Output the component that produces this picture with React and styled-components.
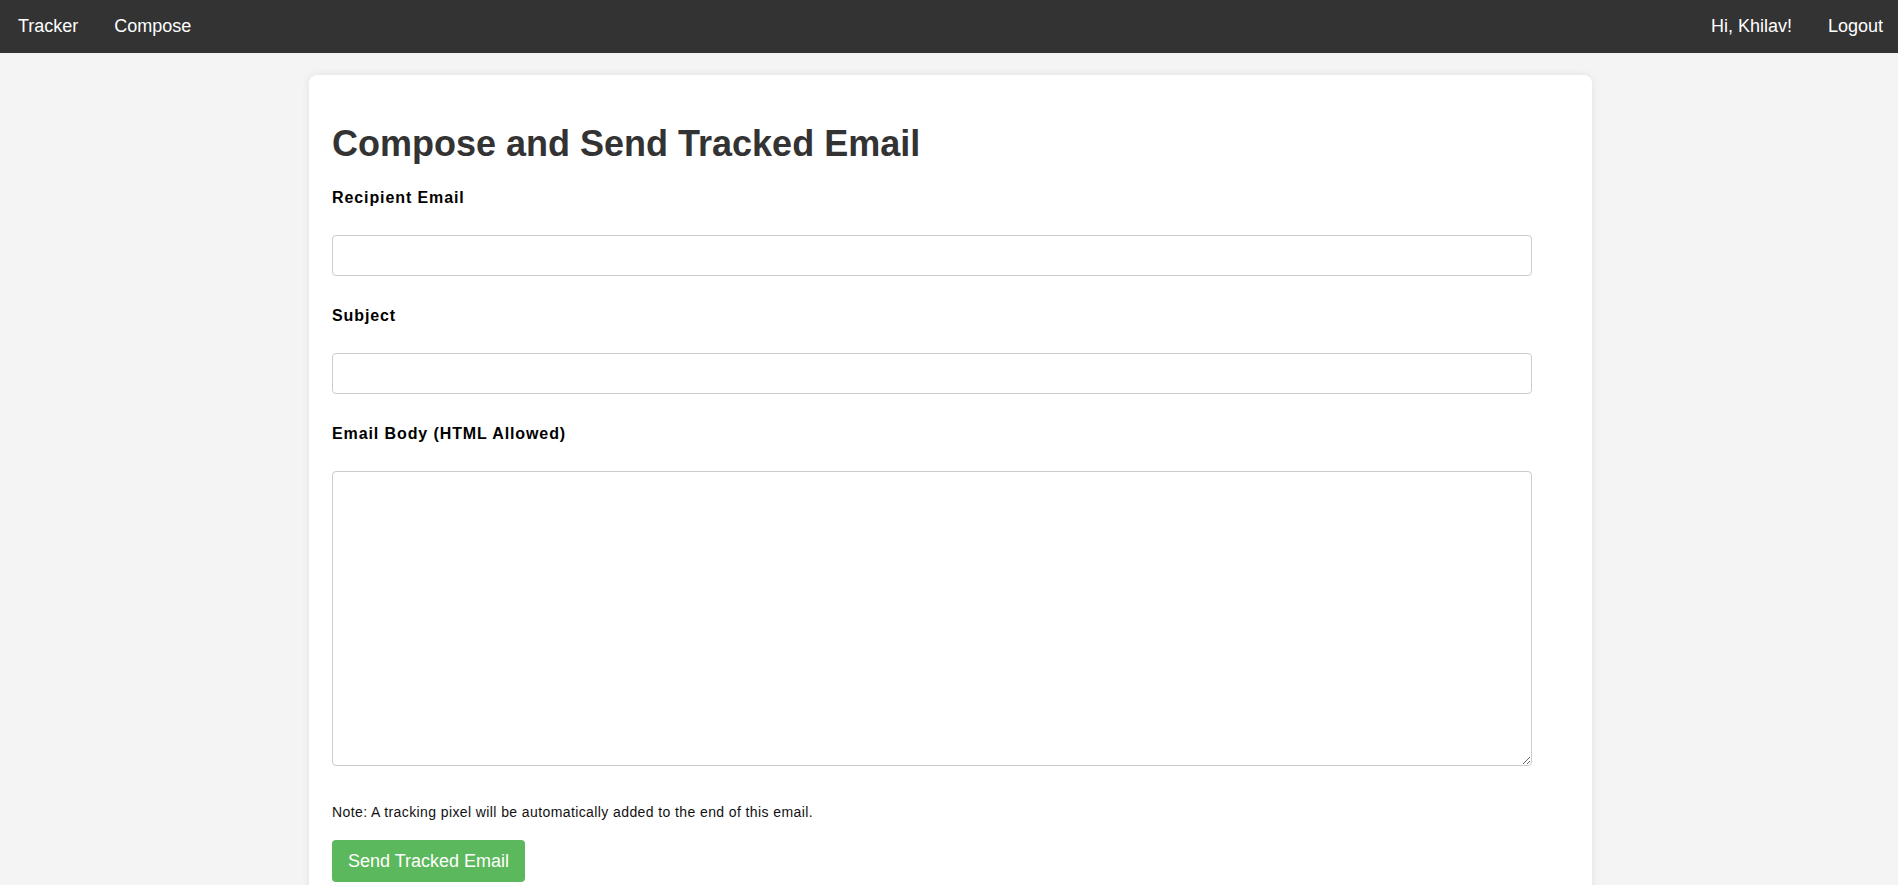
import React from "react";
import styled, { createGlobalStyle } from "styled-components";

const GlobalStyle = createGlobalStyle`
  body {
    margin: 0;
    background: #f4f4f4;
    font-family: "Liberation Sans", Arial, sans-serif;
  }
`;

const Navbar = styled.nav`
  display: flex;
  justify-content: space-between;
  align-items: center;
  height: 53px;
  padding: 0 15px 0 18px;
  background: #333;
`;

const NavGroup = styled.div`
  display: flex;
  align-items: center;
  gap: 36px;
`;

const NavLink = styled.a`
  color: #fff;
  font-size: 18px;
  text-decoration: none;
  cursor: pointer;
`;

const NavText = styled.span`
  color: #fff;
  font-size: 18px;
`;

const Card = styled.div`
  box-sizing: border-box;
  width: 1283px;
  margin: 22px 0 0 calc(50% - 640px);
  padding: 24px 23px;
  background: #fff;
  border-radius: 8px;
  box-shadow: 0 0 8px rgba(0, 0, 0, 0.08);
`;

const Title = styled.h1`
  margin: 24px 0;
  font-size: 36px;
  font-weight: bold;
  color: #333;
`;

const Label = styled.label`
  display: block;
  margin-bottom: 28px;
  font-size: 16px;
  font-weight: bold;
  letter-spacing: 0.9px;
  color: #000;
`;

const Input = styled.input`
  display: block;
  box-sizing: border-box;
  width: 1200px;
  height: 41px;
  margin: 0 0 31px;
  padding: 10px;
  border: 1px solid #ccc;
  border-radius: 4px;
  font-family: inherit;
  font-size: 16px;
`;

const TextArea = styled.textarea`
  display: block;
  box-sizing: border-box;
  width: 1200px;
  height: 295px;
  margin: 0;
  padding: 10px;
  border: 1px solid #ccc;
  border-radius: 4px;
  font-family: inherit;
  font-size: 16px;
`;

const Note = styled.p`
  margin: 38px 0 20px;
  font-size: 14px;
  letter-spacing: 0.4px;
  color: #111;
`;

const SendButton = styled.button`
  height: 42px;
  padding: 0 16px;
  border: none;
  border-radius: 4px;
  background: #5cb85c;
  color: #fff;
  font-family: inherit;
  font-size: 18px;
  cursor: pointer;
`;

export default function App() {
  return (
    <>
      <GlobalStyle />
      <Navbar>
        <NavGroup>
          <NavLink>Tracker</NavLink>
          <NavLink>Compose</NavLink>
        </NavGroup>
        <NavGroup>
          <NavText>Hi, Khilav!</NavText>
          <NavLink>Logout</NavLink>
        </NavGroup>
      </Navbar>
      <Card>
        <Title>Compose and Send Tracked Email</Title>
        <form onSubmit={(e) => e.preventDefault()}>
          <Label htmlFor="to">Recipient Email</Label>
          <Input id="to" type="email" />
          <Label htmlFor="subject">Subject</Label>
          <Input id="subject" type="text" />
          <Label htmlFor="body">Email Body (HTML Allowed)</Label>
          <TextArea id="body" />
          <Note>Note: A tracking pixel will be automatically added to the end of this email.</Note>
          <SendButton type="submit">Send Tracked Email</SendButton>
        </form>
      </Card>
    </>
  );
}
